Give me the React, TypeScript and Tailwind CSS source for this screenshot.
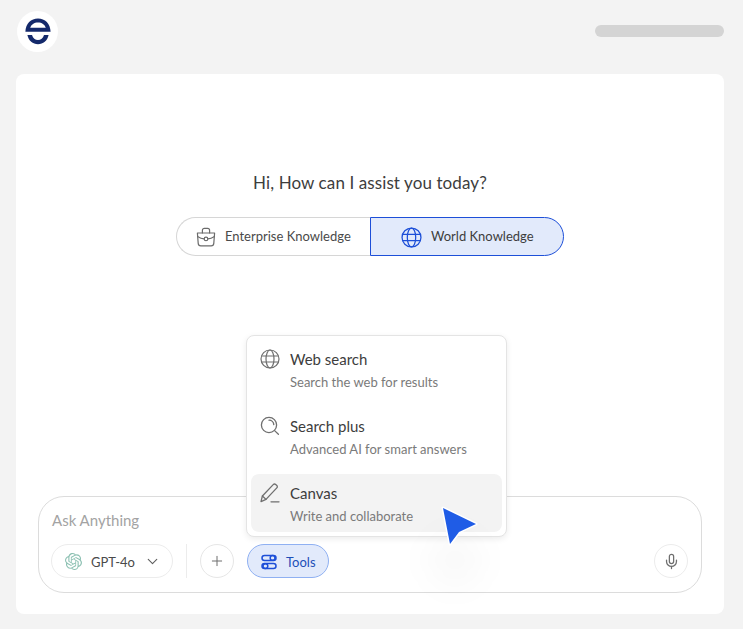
import { ChevronDown, Plus, Mic } from "lucide-react";
import { SiOpenai } from "react-icons/si";

const font = { fontFamily: "Lato, sans-serif" };

const Logo = () => (
  <svg width="26" height="27" viewBox="0 0 26 27" fill="none">
    <path d="M0.4 13.7 C0.6 5.6 6 0.4 13 0.4 C20 0.4 25.4 5.6 25.6 13.7 Z M5.2 9.7 L20.8 9.7 C19.8 6.4 16.8 4.4 13 4.4 C9.2 4.4 6.2 6.4 5.2 9.7 Z" fill="#14296b" fillRule="evenodd" />
    <path d="M2.4 17 L7 17 C8 20.4 10.2 22 13 22 C15.8 22 18 20.4 19 17 L23.6 17 C22.4 23 18.2 26.2 13 26.2 C7.8 26.2 3.6 23 2.4 17 Z" fill="#14296b" />
  </svg>
);

const Globe = ({ className, size }: { className: string; size: number }) => (
  <svg width={size} height={size} viewBox="0 0 20 20" fill="none" stroke="currentColor" strokeWidth="1.2" className={className}>
    <circle cx="10" cy="10" r="9" />
    <ellipse cx="10" cy="10" rx="4" ry="9" />
    <path d="M1.6 7H18.4M1.6 13H18.4" />
  </svg>
);

const Briefcase = () => (
  <svg width="20" height="20" viewBox="0 0 20 20" fill="none" stroke="#6b6b6b" strokeWidth="1.2" strokeLinecap="round" strokeLinejoin="round">
    <path d="M1.4 6 H18.6 L17.8 16.4 C17.7 17.8 16.7 18.8 15.2 18.8 H4.8 C3.3 18.8 2.3 17.8 2.2 16.4 Z" />
    <path d="M6.4 6 V3.4 C6.4 2.2 7.2 1.4 8.4 1.4 H11.6 C12.8 1.4 13.6 2.2 13.6 3.4 V6" />
    <path d="M1.6 9.4 C4 11 6 11.7 8.2 11.9 M11.8 11.9 C14 11.7 16 11 18.4 9.4" />
    <circle cx="10" cy="11.9" r="1.8" />
  </svg>
);

const SearchPlus = () => (
  <svg width="20" height="20" viewBox="0 0 20 20" fill="none" stroke="#6f6f6f" strokeWidth="1.3" strokeLinecap="round">
    <circle cx="9" cy="9" r="7.6" />
    <path d="M14.6 14.6 L18.4 18.2" />
    <path d="M9 4.2 C11.6 4.2 13.6 6.2 13.8 8.6" />
  </svg>
);

const Pen = () => (
  <svg width="20" height="20" viewBox="0 0 20 20" fill="none" stroke="#6f6f6f" strokeWidth="1.3" strokeLinecap="round" strokeLinejoin="round">
    <path d="M1 18.6 L2.4 13 L13.2 1.6 C13.9 0.9 15 0.9 15.7 1.5 L16.8 2.5 C17.5 3.2 17.5 4.2 16.8 4.9 L6 16.4 Z" />
    <path d="M2.4 13 L6 16.4" />
    <path d="M11 18.8 H19" />
  </svg>
);

const Sliders = () => (
  <svg width="16" height="16" viewBox="0 0 16 16" fill="none" stroke="#1d4fd8" strokeWidth="1.5" className="mt-[2px]">
    <rect x="1" y="1.4" width="14" height="5" rx="2.5" />
    <rect x="1" y="9.6" width="14" height="5" rx="2.5" />
    <circle cx="11.6" cy="3.9" r="2.4" />
    <circle cx="4.4" cy="12.1" r="2.4" />
  </svg>
);

const Cursor = () => (
  <svg width="42" height="46" viewBox="0 0 42 46" className="absolute left-[437px] top-[503px]">
    <path d="M6 5 L39 21 L22 29 L13 41 Z" fill="#1f5ce6" stroke="#ffffff" strokeWidth="3" strokeLinejoin="round" paintOrder="stroke" />
  </svg>
);

const tools = [
  { icon: <Globe size={20} className="text-[#6f6f6f]" />, title: "Web search", desc: "Search the web for results", active: false },
  { icon: <SearchPlus />, title: "Search plus", desc: "Advanced AI for smart answers", active: false },
  { icon: <Pen />, title: "Canvas", desc: "Write and collaborate", active: true },
];

export default function App() {
  return (
    <div className="relative h-[629px] w-[743px] overflow-hidden bg-[#f3f3f3]" style={font}>
      {/* top bar */}
      <div className="flex h-[74px] items-start justify-between pl-[17px] pr-[19px]">
        <div className="mt-[11px] flex h-[41px] w-[41px] items-center justify-center rounded-full bg-white">
          <Logo />
        </div>
        <div className="mt-[25px] h-[12px] w-[129px] rounded-full bg-[#d4d4d4]" />
      </div>

      {/* main card */}
      <div className="ml-[16px] flex h-[540px] w-[708px] flex-col items-center rounded-lg bg-white px-[22px] pt-[98px]">
        <h1 className="text-[17px] leading-[22px] tracking-[0.1px] text-[#3d3d3d]">Hi, How can I assist you today?</h1>

        <div className="mt-[23px] flex h-[39px]">
          <button className="flex w-[194px] items-center gap-[9px] rounded-l-full border border-r-0 border-[#d6d6d6] bg-white pl-[19px] pt-px text-[13px] text-[#4a4a4a]">
            <Briefcase />
            Enterprise Knowledge
          </button>
          <button className="flex w-[194px] items-center gap-[9px] rounded-r-full border border-[#1d4fd8] bg-[#e2eafb] pl-[30px] pt-px text-[13px] text-[#3d3d3d]">
            <Globe size={21} className="text-[#1d4fd8]" />
            World Knowledge
          </button>
        </div>

        {/* prompt box */}
        <div className="mt-[240px] flex h-[97px] w-[664px] flex-col rounded-[26px] border border-[#dcdcdc] bg-white pl-[12px] pr-[13px]">
          <div className="ml-px mt-[13px] text-[15px] leading-[20px] text-[#a3a3a3]">Ask Anything</div>
          <div className="mt-[14px] flex items-center">
            <div className="flex h-[34px] w-[122px] items-center rounded-full border border-[#ececec] pl-[13px] text-[13px] text-[#4a4a4a]">
              <SiOpenai size={17} className="mt-px text-[#8cc0b2]" />
              <span className="ml-[9px] mt-[3px]">GPT-4o</span>
              <ChevronDown size={17} strokeWidth={1.6} className="ml-[9px] mt-px text-[#5f5f5f]" />
            </div>
            <div className="ml-[13px] h-[34px] w-px bg-[#ececec]" />
            <div className="ml-[13px] flex h-[34px] w-[34px] items-center justify-center rounded-full border border-[#e6e6e6] text-[#6f6f6f]">
              <Plus size={16} strokeWidth={1.5} />
            </div>
            <div className="ml-[13px] flex h-[34px] w-[82px] items-center gap-[9px] rounded-full border border-[#8fb0f2] bg-[#e2eafb] pl-[13px] text-[13px] text-[#1d4fb8]">
              <Sliders />
              <span className="mt-[3px]">Tools</span>
            </div>
            <div className="ml-auto flex h-[34px] w-[34px] items-center justify-center rounded-full border border-[#ececec] text-[#6f6f6f]">
              <Mic size={17} strokeWidth={1.8} />
            </div>
          </div>
        </div>
      </div>

      {/* tools menu */}
      <div className="absolute left-[246px] top-[335px] flex h-[202px] w-[261px] flex-col gap-[9px] rounded-lg border border-[#e4e4e4] bg-white px-[4px] pt-[4px] shadow-[0_2px_6px_rgba(0,0,0,0.08)]">
        {tools.map((t) => (
          <div key={t.title} className={`flex h-[58px] items-start rounded-lg pl-[9px] ${t.active ? "bg-[#f3f3f3]" : ""}`}>
            <div className="mt-[9px] w-[20px] shrink-0">{t.icon}</div>
            <div className="ml-[10px] mt-[9px]">
              <div className="text-[15px] leading-[20px] text-[#3d3d3d]">{t.title}</div>
              <div className="mt-[4px] text-[13px] leading-[18px] text-[#7a7a7a]">{t.desc}</div>
            </div>
          </div>
        ))}
      </div>

      {/* pointer */}
      <div className="absolute left-[425px] top-[530px] h-[60px] w-[60px] rounded-full bg-black/[0.02] blur-[14px]" />
      <Cursor />
    </div>
  );
}
